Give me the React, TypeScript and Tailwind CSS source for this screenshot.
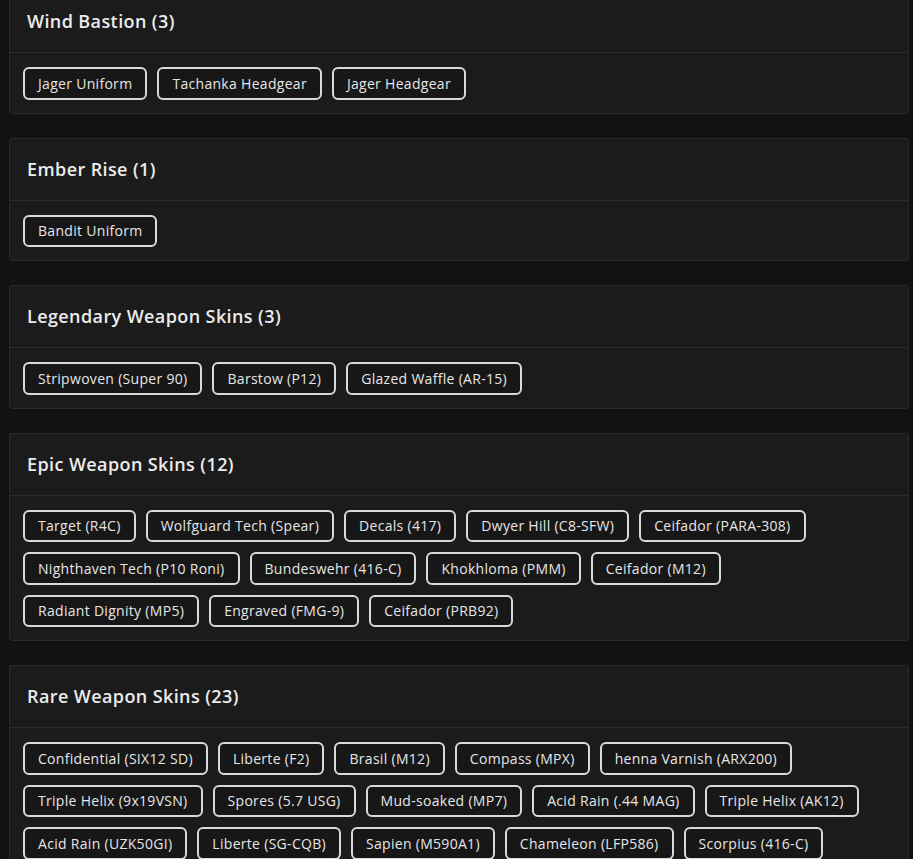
import React from 'react'

type Group = {
  title: string
  count: number
  items: string[]
}

// only the part of the list that is on screen; counts come from the data
const GROUPS: Group[] = [
  { title: 'Wind Bastion', count: 3, items: ['Jager Uniform', 'Tachanka Headgear', 'Jager Headgear'] },
  { title: 'Ember Rise', count: 1, items: ['Bandit Uniform'] },
  {
    title: 'Legendary Weapon Skins',
    count: 3,
    items: ['Stripwoven (Super 90)', 'Barstow (P12)', 'Glazed Waffle (AR-15)'],
  },
  {
    title: 'Epic Weapon Skins',
    count: 12,
    items: [
      'Target (R4C)',
      'Wolfguard Tech (Spear)',
      'Decals (417)',
      'Dwyer Hill (C8-SFW)',
      'Ceifador (PARA-308)',
      'Nighthaven Tech (P10 Roni)',
      'Bundeswehr (416-C)',
      'Khokhloma (PMM)',
      'Ceifador (M12)',
      'Radiant Dignity (MP5)',
      'Engraved (FMG-9)',
      'Ceifador (PRB92)',
    ],
  },
  {
    title: 'Rare Weapon Skins',
    count: 23,
    items: [
      'Confidential (SIX12 SD)',
      'Liberte (F2)',
      'Brasil (M12)',
      'Compass (MPX)',
      'henna Varnish (ARX200)',
      'Triple Helix (9x19VSN)',
      'Spores (5.7 USG)',
      'Mud-soaked (MP7)',
      'Acid Rain (.44 MAG)',
      'Triple Helix (AK12)',
      'Acid Rain (UZK50GI)',
      'Liberte (SG-CQB)',
      'Sapien (M590A1)',
      'Chameleon (LFP586)',
      'Scorpius (416-C)',
    ],
  },
]

function Chip({ label }: { label: string }) {
  return (
    <span className="flex h-[32.5px] items-center rounded-[6px] border-2 border-[#d9d9d9] bg-[#171717] px-[13px] text-[14px] tracking-[0.3px] text-[#e6e6e6]">
      {label}
    </span>
  )
}

export default function App() {
  return (
    <div
      className="h-screen overflow-hidden bg-[#121212]"
      style={{ fontFamily: '"Open Sans", "Liberation Sans", sans-serif' }}
    >
      <div className="ml-[9px] -mt-[10px] flex w-[900px] flex-col gap-6 pb-10">
        {GROUPS.map((g) => (
          <div key={g.title} className="rounded-[3px] border border-[#2a2a2a] bg-[#1b1b1b]">
            <div className="flex h-[62px] items-center border-b border-[#2c2c2c] px-[17px]">
              <h3 className="text-[18px] font-semibold tracking-[0.4px] text-[#ececec]">
                {g.title} ({g.count})
              </h3>
            </div>
            <div className="flex flex-wrap gap-[10px] px-[13px] pt-[14px] pb-[13px]">
              {g.items.map((item) => (
                <Chip key={item} label={item} />
              ))}
            </div>
          </div>
        ))}
      </div>
    </div>
  )
}
